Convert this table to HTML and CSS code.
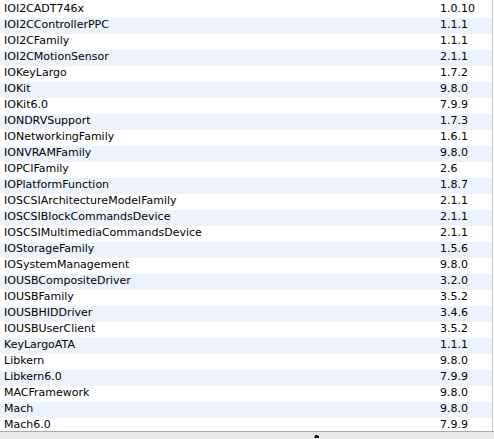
FILE: index.html
```html
<!DOCTYPE html>
<html>
<head>
<meta charset="utf-8">
<link rel="stylesheet" href="styles.css">
</head>
<body>
<div class="window">
  <div class="table">
    <div class="row"><span class="name">IOI2CADT746x</span><span class="ver">1.0.10</span></div>
    <div class="row"><span class="name">IOI2CControllerPPC</span><span class="ver">1.1.1</span></div>
    <div class="row"><span class="name">IOI2CFamily</span><span class="ver">1.1.1</span></div>
    <div class="row"><span class="name">IOI2CMotionSensor</span><span class="ver">2.1.1</span></div>
    <div class="row"><span class="name">IOKeyLargo</span><span class="ver">1.7.2</span></div>
    <div class="row"><span class="name">IOKit</span><span class="ver">9.8.0</span></div>
    <div class="row"><span class="name">IOKit6.0</span><span class="ver">7.9.9</span></div>
    <div class="row"><span class="name">IONDRVSupport</span><span class="ver">1.7.3</span></div>
    <div class="row"><span class="name">IONetworkingFamily</span><span class="ver">1.6.1</span></div>
    <div class="row"><span class="name">IONVRAMFamily</span><span class="ver">9.8.0</span></div>
    <div class="row"><span class="name">IOPCIFamily</span><span class="ver">2.6</span></div>
    <div class="row"><span class="name">IOPlatformFunction</span><span class="ver">1.8.7</span></div>
    <div class="row"><span class="name">IOSCSIArchitectureModelFamily</span><span class="ver">2.1.1</span></div>
    <div class="row"><span class="name">IOSCSIBlockCommandsDevice</span><span class="ver">2.1.1</span></div>
    <div class="row"><span class="name">IOSCSIMultimediaCommandsDevice</span><span class="ver">2.1.1</span></div>
    <div class="row"><span class="name">IOStorageFamily</span><span class="ver">1.5.6</span></div>
    <div class="row"><span class="name">IOSystemManagement</span><span class="ver">9.8.0</span></div>
    <div class="row"><span class="name">IOUSBCompositeDriver</span><span class="ver">3.2.0</span></div>
    <div class="row"><span class="name">IOUSBFamily</span><span class="ver">3.5.2</span></div>
    <div class="row"><span class="name">IOUSBHIDDriver</span><span class="ver">3.4.6</span></div>
    <div class="row"><span class="name">IOUSBUserClient</span><span class="ver">3.5.2</span></div>
    <div class="row"><span class="name">KeyLargoATA</span><span class="ver">1.1.1</span></div>
    <div class="row"><span class="name">Libkern</span><span class="ver">9.8.0</span></div>
    <div class="row"><span class="name">Libkern6.0</span><span class="ver">7.9.9</span></div>
    <div class="row"><span class="name">MACFramework</span><span class="ver">9.8.0</span></div>
    <div class="row"><span class="name">Mach</span><span class="ver">9.8.0</span></div>
    <div class="row"><span class="name">Mach6.0</span><span class="ver">7.9.9</span></div>
  </div>
  <div class="footer">
    <svg class="grip" width="6" height="5" viewBox="0 0 6 5"><path d="M1 1h3v1h1v2h-4z" fill="#111"/><path d="M0 2h1v2h-1z" fill="#777"/></svg>
  </div>
</div>
</body>
</html>
```
FILE: styles.css
```css
html, body {
  margin: 0;
  padding: 0;
  background: #ffffff;
}
.window {
  width: 494px;
  height: 439px;
  display: flex;
  flex-direction: column;
  overflow: hidden;
  font-family: "DejaVu Sans", "Liberation Sans", sans-serif;
  font-size: 11px;
  color: #000;
}
.table {
  height: 431px;
  flex: none;
  overflow: hidden;
  padding-top: 2px;
  border-right: 1px solid #c8c8c8;
  box-sizing: border-box;
  width: 493px;
}
.row {
  height: 16px;
  box-sizing: border-box;
  padding-bottom: 2px;
  display: flex;
  align-items: flex-start;
  line-height: 14px;
}
.row:nth-child(even) {
  background: #edf3fe;
}
.name {
  padding-left: 4px;
  width: 436px;
  white-space: nowrap;
  overflow: hidden;
}
.ver {
  white-space: nowrap;
}
.footer {
  flex: none;
  height: 8px;
  border-top: 1px solid #a9a9a9;
  background: #e8e8e8;
  position: relative;
}
.grip {
  position: absolute;
  left: 314px;
  top: 2px;
}
```
